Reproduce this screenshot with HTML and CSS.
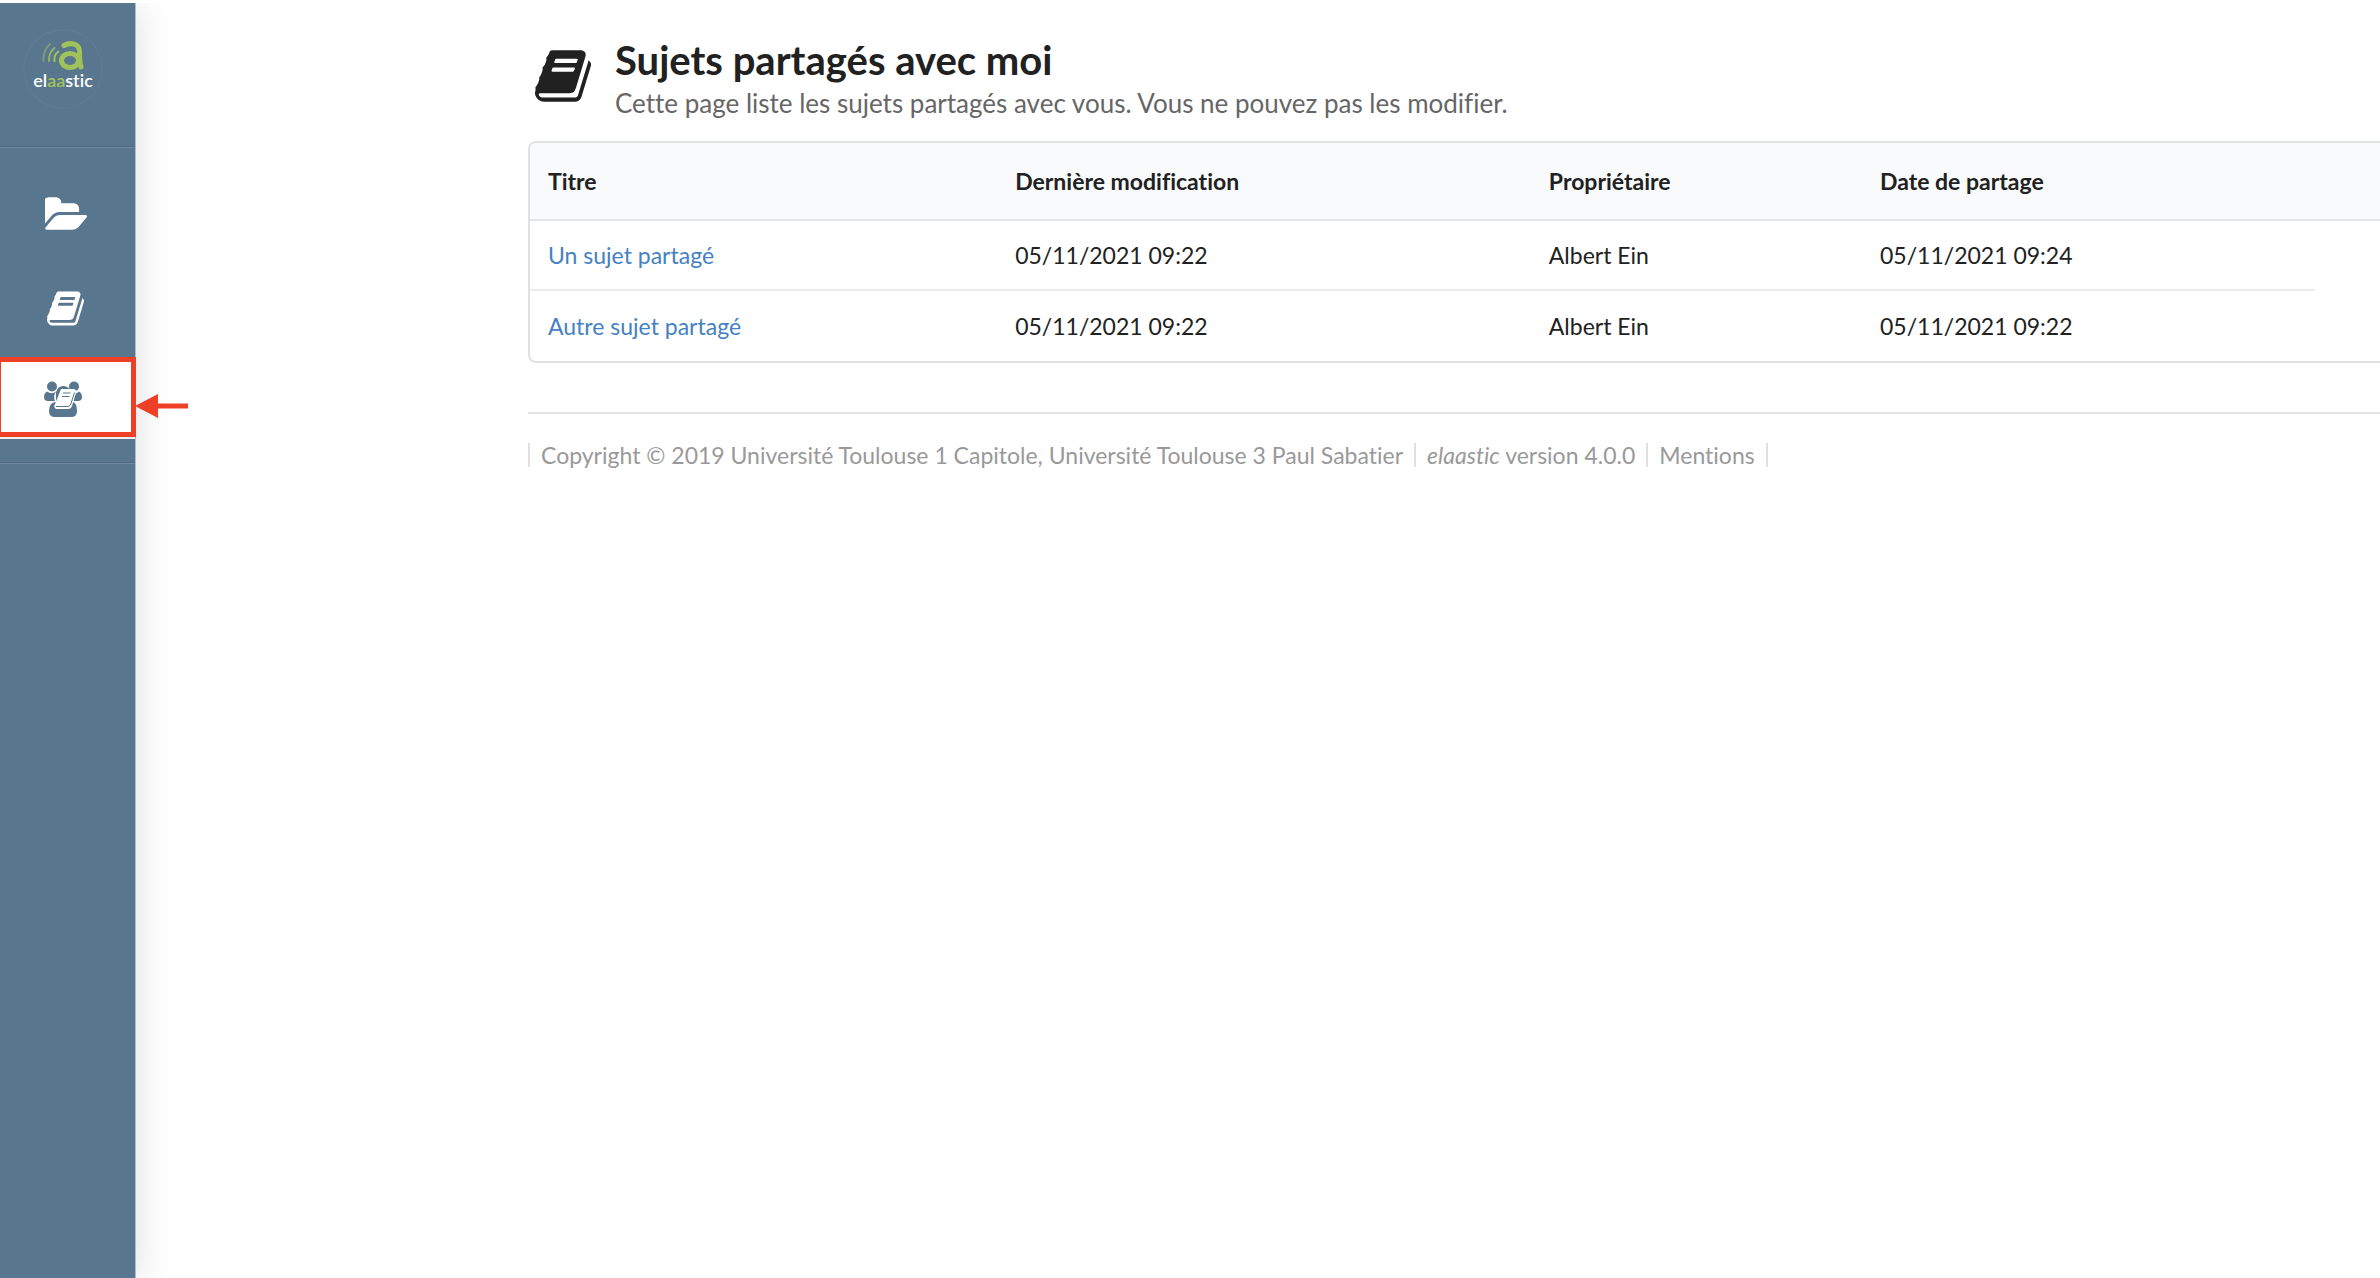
FILE: index.html
```html
<!DOCTYPE html>
<html lang="fr">
<head>
<meta charset="utf-8">
<title>Sujets partagés avec moi</title>
<link rel="stylesheet" href="styles.css">
</head>
<body>
<svg width="0" height="0" class="defs" aria-hidden="true">
  <symbol id="book" viewBox="0 128 1664 1536"><path d="M1639 478q40 57 18 129l-275 906q-19 64-76.5 107.5t-122.5 43.5h-923q-77 0-148.5-53.5t-99.5-131.5q-24-67-2-127 0-4 3-27t4-37q1-8-3-21.5t-3-19.5q2-11 8-21t16.5-23.5 16.5-23.5q23-38 45-91.5t30-91.5q3-10 .5-30t-.5-28q3-11 17-28t17-23q21-36 42-92t25-90q1-9-2.5-32t.5-28q4-13 22-30.5t22-22.5q19-26 42.5-84.5t27.5-96.5q1-8-3-25.5t-2-26.5q2-8 9-18t18-23 17-21q8-12 16.5-30.5t15-35 16-36 19.5-32 26.5-23.5 36-11.5 47.5 5.5l-1 3q38-9 51-9h761q74 0 114 56t18 130l-274 906q-36 119-71.5 153.5t-128.5 34.5h-869q-27 0-38 15-11 16-1 43 24 70 144 70h923q29 0 56-15.5t35-41.5l300-987q7-22 5-57 38 15 59 43zm-1064 2q-4 13 2 22.5t20 9.5h608q13 0 25.5-9.5t16.5-22.5l21-64q4-13-2-22.5t-20-9.5h-608q-13 0-25.5 9.5t-16.5 22.5zm-83 256q-4 13 2 22.5t20 9.5h608q13 0 25.5-9.5t16.5-22.5l21-64q4-13-2-22.5t-20-9.5h-608q-13 0-25.5 9.5t-16.5 22.5z"/></symbol>
</svg>
<nav class="sidebar" aria-label="Navigation">
  <a class="brand" href="#">
    <svg class="brand-mark" viewBox="0 0 42 30" aria-hidden="true">
      <g fill="none" stroke="#9fc35a" stroke-linecap="round">
        <path d="M8 3Q1 9 1.500 20" stroke-width="2" opacity=".5"/>
        <path d="M12.500 7Q6.500 12 7 20" stroke-width="2" opacity=".8"/>
        <path d="M16.500 10.500Q11.500 14 12.500 20" stroke-width="2"/>
        <path d="M22 4.500C27 1.500 37 1.500 37.500 10Q37.500 22 39 26" stroke-width="5"/>
        <ellipse cx="28" cy="19.500" rx="8.500" ry="7" stroke-width="5"/>
      </g>
    </svg>
    <span class="brand-name">el<b>aa</b>stic</span>
  </a>
  <a class="item item-courses" href="#" aria-label="Mes cours">
    <svg class="icon-folder" viewBox="0 128 1815 1408" aria-hidden="true"><path d="M1815 952q0 31-31 66l-336 396q-43 51-120.500 86.500t-143.500 35.500h-1088q-34 0-60.500-13t-26.500-43q0-31 31-66l336-396q43-51 120.500-86.500t143.500-35.500h1088q34 0 60.500 13t26.500 43zm-343-344v160h-832q-94 0-197 47.500t-164 119.500l-337 396-5 6q0-4-.5-12.500t-.5-12.500v-960q0-92 66-158t158-66h320q92 0 158 66t66 158v32h544q92 0 158 66t66 158z"/></svg>
  </a>
  <a class="item" href="#" aria-label="Mes sujets"><svg class="icon-book" aria-hidden="true"><use href="#book"/></svg></a>
  <a class="item active" href="#" aria-label="Sujets partagés avec moi">
    <svg class="icon-shared" viewBox="0 0 38 36" aria-hidden="true">
      <circle cx="8" cy="5.500" r="5"/><circle cx="30" cy="5.500" r="5"/>
      <path d="M3 10.500Q8 14 12 10.500Q9 15 11 20H4Q0 20 0 16Q0 12 3 10.500zM35 10.500Q31 14 29 11L26 20H34Q38 20 38 16Q38 12 35 10.500z"/>
      <path d="M12 11Q14 5 19 5Q24 5 26 9L20 20H12z"/>
      <path d="M11 21Q5 22 5 30Q5 36 11 36H27Q33 36 33 30Q33 22 29 21z"/>
      <path d="M17 8H30Q33 9 32 12L28 25Q27 28 24 28H12Q9 26 11 23Z" fill="#fff"/>
      <path d="M19 12H26.500M18 15.500H25.500M12 25.500H24Q26 25.500 27 22.500L30.500 11.500" class="shared-lines"/>
    </svg>
  </a>
  <div class="sidebar-end"></div>
  <svg class="pointer" viewBox="0 0 53 24" aria-hidden="true"><path d="M0 12L23 0V9.500H53V14.500H23V24z"/></svg>
</nav>
<main class="content">
  <header class="page-header">
    <svg class="header-icon" aria-hidden="true"><use href="#book"/></svg>
    <div>
      <h1>Sujets partagés avec moi</h1>
      <p>Cette page liste les sujets partagés avec vous. Vous ne pouvez pas les modifier.</p>
    </div>
  </header>
  <div class="table-frame">
    <table>
      <colgroup><col class="c-title"><col class="c-modified"><col class="c-owner"><col class="c-shared"><col class="c-end"></colgroup>
      <thead><tr><th>Titre</th><th>Dernière modification</th><th>Propriétaire</th><th>Date de partage</th><th></th></tr></thead>
      <tbody>
        <tr><td><a href="#">Un sujet partagé</a></td><td>05/11/2021 09:22</td><td>Albert Ein</td><td>05/11/2021 09:24</td></tr>
        <tr><td><a href="#">Autre sujet partagé</a></td><td>05/11/2021 09:22</td><td>Albert Ein</td><td>05/11/2021 09:22</td></tr>
      </tbody>
    </table>
  </div>
  <footer>
    <span>Copyright © 2019 Université Toulouse 1 Capitole, Université Toulouse 3 Paul Sabatier</span>
    <span><em>elaastic</em> version 4.0.0</span>
    <a href="#">Mentions</a>
  </footer>
</main>
</body>
</html>
```
FILE: styles.css
```css
* { box-sizing: border-box; }
body {
  margin: 0;
  padding-top: 3px;
  min-height: 100vh;
  display: flex;
  background: #fff;
  color: #212121;
  font: 23px/32px Lato, "Liberation Sans", sans-serif;
  font-variant-ligatures: none;
}
a { color: #4581c3; text-decoration: none; }
.defs { position: absolute; }

.sidebar {
  position: relative;
  flex: 0 0 136px;
  display: flex;
  flex-direction: column;
  background: #58768d;
  border-right: 1px solid #aebcc8;
  box-shadow: 0 3px 36px rgba(34, 36, 38, .15);
  clip-path: inset(0 -60px 0 0);
}
.brand {
  height: 145px;
  padding: 38px 9px 0 0;
  display: flex;
  flex-direction: column;
  align-items: center;
  background: radial-gradient(circle at 63px 66px, transparent 38px, #5a7d99 39px, transparent 40px);
  border-bottom: 1px solid #6f8aa0;
  box-shadow: inset 0 -1px #4e6a80;
}
.brand-mark { width: 42px; height: 30px; }
.brand-name { color: #fff; font-size: 18px; font-weight: 600; line-height: 18px; }
.brand-name b { color: #9fc35a; font-weight: 600; }
.item {
  height: 97px;
  padding-right: 4px;
  display: flex;
  align-items: center;
  justify-content: center;
  fill: #fff;
}
.item-courses { height: 112px; padding-top: 18px; }
.icon-folder { width: 42px; height: 33px; }
.icon-book { width: 37px; height: 35px; }
.item.active {
  height: 80px;
  margin: 0 -1px 0 -4px;
  padding: 4px 6px 0 0;
  background: #fff;
  border: 5px solid #ee4026;
  fill: #58768d;
}
.icon-shared { width: 38px; height: 36px; }
.shared-lines { fill: none; stroke: #58768d; stroke-width: 1; }
.sidebar-end {
  height: 27px;
  border-top: 2px solid #f0f3f5;
  border-bottom: 1px solid #6f8aa0;
  box-shadow: inset 0 -1px #4e6a80;
}
.pointer {
  position: absolute;
  left: 100%;
  top: 391px;
  width: 53px;
  height: 24px;
  fill: #ee4026;
}

.content { flex: 1; min-width: 0; padding: 34px 0 0 392px; }
.page-header { display: flex; gap: 24px; padding-left: 7px; }
.header-icon { width: 56px; height: 52px; margin-top: 13px; fill: #212121; }
h1 { margin: 0; font-size: 40px; line-height: 46px; }
.page-header p { margin: 0; color: #666; font-size: 26px; line-height: 40px; }
.table-frame {
  margin-top: 18px;
  border: 2px solid #e0e1e2;
  border-right: 0;
  border-radius: 8px 0 0 8px;
  overflow: hidden;
}
table { width: 100%; table-layout: fixed; border-collapse: separate; border-spacing: 0; }
.c-title { width: 25.25%; }
.c-modified { width: 28.85%; }
.c-owner { width: 17.9%; }
.c-shared { width: 24.5%; }
th { height: 78px; padding: 0 18px; background: #f9fafb; text-align: left; border-bottom: 2px solid #e3e4e6; }
td { height: 70px; padding: 0 18px; }
tbody tr:first-child td { border-bottom: 2px solid #ebebeb; }
footer {
  margin-top: 49px;
  padding-top: 29px;
  border-top: 2px solid #e3e4e5;
  display: flex;
  color: #999;
}
footer > * { padding: 0 11px; height: 24px; line-height: 24px; color: #999; border-right: 2px solid #e0e0e0; }
footer > :first-child { border-left: 2px solid #e0e0e0; }
```
